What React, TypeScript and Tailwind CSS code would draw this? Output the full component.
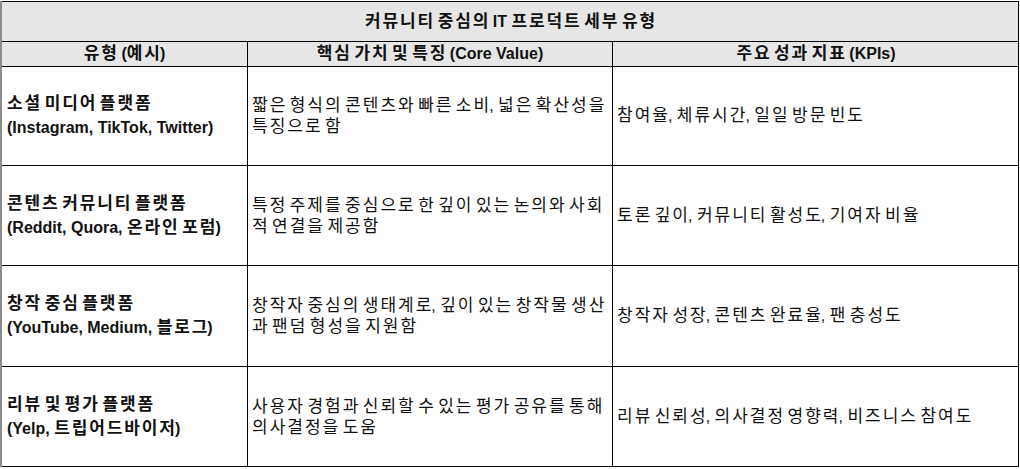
import React from "react";

const rows = [
  {
    h: "h-[99px]",
    name: "소셜 미디어 플랫폼",
    ex: "(Instagram, TikTok, Twitter)",
    value: ["짧은 형식의 콘텐츠와 빠른 소비, 넓은 확산성을", "특징으로 함"],
    kpi: "참여율, 체류시간, 일일 방문 빈도",
  },
  {
    h: "h-[100px]",
    name: "콘텐츠 커뮤니티 플랫폼",
    ex: "(Reddit, Quora, 온라인 포럼)",
    value: ["특정 주제를 중심으로 한 깊이 있는 논의와 사회", "적 연결을 제공함"],
    kpi: "토론 깊이, 커뮤니티 활성도, 기여자 비율",
  },
  {
    h: "h-[101px]",
    name: "창작 중심 플랫폼",
    ex: "(YouTube, Medium, 블로그)",
    value: ["창작자 중심의 생태계로, 깊이 있는 창작물 생산", "과 팬덤 형성을 지원함"],
    kpi: "창작자 성장, 콘텐츠 완료율, 팬 충성도",
  },
  {
    h: "h-[100px]",
    name: "리뷰 및 평가 플랫폼",
    ex: "(Yelp, 트립어드바이저)",
    value: ["사용자 경험과 신뢰할 수 있는 평가 공유를 통해", "의사결정을 도움"],
    kpi: "리뷰 신뢰성, 의사결정 영향력, 비즈니스 참여도",
  },
];

function K({ t, bold = false }: { t: string; bold?: boolean }) {
  const parts = t.split(/([\uAC00-\uD7A3]+)/);
  return (
    <span>
      {parts.map((p, i) =>
        /[\uAC00-\uD7A3]/.test(p) ? (
          <span
            key={i}
            className={
              bold
                ? "text-[17px] tracking-[1.9px] mr-[-1.9px]"
                : "text-[17px] tracking-[2px] mr-[-2px]"
            }
          >
            {p}
          </span>
        ) : (
          <React.Fragment key={i}>{p}</React.Fragment>
        )
      )}
    </span>
  );
}

export default function App() {
  return (
    <div
      className="w-[1020px] h-[469px] bg-white pt-px text-[#111] text-[16px]"
      style={{ fontFamily: '"Liberation Sans", Arial, "Noto Sans CJK KR", sans-serif' }}
    >
      <div className="w-[1019px] border-l-2 border-l-[#8c8c8c]">
        <div className="border-t border-r border-black">
          <div className="h-[40px] bg-[#e6e6e6] border-b border-black flex items-center justify-center font-bold whitespace-nowrap">
            <K t="커뮤니티 중심의 IT 프로덕트 세부 유형" bold />
          </div>
          <div className="grid grid-cols-[246px_365px_406px] h-[25px] bg-[#e6e6e6] border-b border-black font-bold whitespace-nowrap leading-[20px]">
            <div className="border-r border-black flex items-center justify-center">
              <K t="유형 (예시)" bold />
            </div>
            <div className="border-r border-black flex items-center justify-center">
              <K t="핵심 가치 및 특징 (Core Value)" bold />
            </div>
            <div className="flex items-center justify-center">
              <K t="주요 성과 지표 (KPIs)" bold />
            </div>
          </div>
          {rows.map((r, i) => (
            <div
              key={i}
              className={`grid grid-cols-[246px_365px_406px] ${r.h} border-b border-black`}
            >
              <div className="border-r border-black flex flex-col justify-center pl-[5px] font-bold leading-[24px] whitespace-nowrap">
                <div>
                  <K t={r.name} bold />
                </div>
                <div>
                  <K t={r.ex} bold />
                </div>
              </div>
              <div className="border-r border-black flex flex-col justify-center pl-[4px] leading-[21px] whitespace-nowrap">
                <div>
                  <K t={r.value[0]} />
                </div>
                <div>
                  <K t={r.value[1]} />
                </div>
              </div>
              <div className="flex items-center pl-[4px] whitespace-nowrap">
                <K t={r.kpi} />
              </div>
            </div>
          ))}
        </div>
      </div>
    </div>
  );
}
